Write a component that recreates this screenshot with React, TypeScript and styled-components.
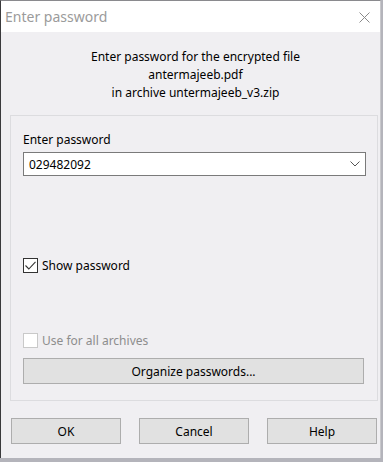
import React from "react";
import styled, { createGlobalStyle } from "styled-components";

const Global = createGlobalStyle`
  html, body { margin: 0; padding: 0; }
  body {
    width: 383px;
    height: 462px;
    overflow: hidden;
    background: #b4b4bb;
    font-family: "Segoe UI", "Noto Sans", "Liberation Sans", sans-serif;
  }
`;

const Window = styled.div`
  width: 381px;
  height: 458px;
  box-sizing: border-box;
  border-left: 1px solid #3a3a3c;
  border-top: 1px solid #8a8a8e;
  border-right: 1px solid #c8c8cc;
  background: #f0eff2;
  display: flex;
  flex-direction: column;
`;

const TitleBar = styled.div`
  height: 31px;
  background: #ffffff;
  display: flex;
  align-items: center;
  justify-content: space-between;
  padding-left: 4px;
  padding-right: 10px;
  flex-shrink: 0;
`;

const Title = styled.span`
  font-size: 14px;
  color: #9b9b9b;
`;

const CloseIcon = styled.svg`
  width: 11px;
  height: 11px;
  margin-top: 1px;
`;

const Body = styled.div`
  flex: 1;
  display: flex;
  flex-direction: column;
  padding: 0 3px 0 9px;
`;

const Message = styled.div`
  margin-top: 16px;
  text-align: center;
  font-size: 12px;
  line-height: 18px;
  color: #000;
  padding-left: 4px;
`;

const GroupBox = styled.div`
  margin-top: 13px;
  width: 368px;
  height: 286px;
  box-sizing: border-box;
  border: 1px solid #dcdcdf;
  padding: 14px 12px 0 12px;
  display: flex;
  flex-direction: column;
`;

const Label = styled.div`
  font-size: 12px;
  line-height: 20px;
  color: #000;
`;

const Combo = styled.div`
  margin-top: 2px;
  width: 343px;
  height: 24px;
  box-sizing: border-box;
  border: 1px solid #7a7a7a;
  background: #fff;
  display: flex;
  align-items: center;
  justify-content: space-between;
  padding: 0 5px 0 5px;
  font-size: 12px;
  color: #000;
`;

const CheckRow = styled.label<{ $top: number; $disabled?: boolean }>`
  margin-top: ${(p) => p.$top}px;
  display: flex;
  align-items: center;
  gap: 4px;
  font-size: 12px;
  line-height: 15px;
  color: ${(p) => (p.$disabled ? "#8d8d8d" : "#000")};
`;

const Box = styled.span<{ $disabled?: boolean }>`
  width: 15px;
  height: 15px;
  box-sizing: border-box;
  border: 1px solid ${(p) => (p.$disabled ? "#c9c9c9" : "#333")};
  background: #fff;
  display: flex;
  align-items: center;
  justify-content: center;
`;

const Button = styled.div<{ $width: number }>`
  width: ${(p) => p.$width}px;
  height: 26px;
  box-sizing: border-box;
  border: 1px solid #adadad;
  background: #e1e1e1;
  display: flex;
  align-items: center;
  justify-content: center;
  font-size: 12px;
  color: #000;
`;

const OrganizeWrap = styled.div`
  margin-top: 10px;
`;

const ButtonRow = styled.div`
  margin-top: 17px;
  display: flex;
  gap: 18px;
  padding-left: 1px;
`;

export default function App() {
  return (
    <>
      <Global />
      <Window>
        <TitleBar>
          <Title>Enter password</Title>
          <CloseIcon viewBox="0 0 11 11">
            <path d="M0.5 0.5 L10.5 10.5 M10.5 0.5 L0.5 10.5" stroke="#8a8a8a" strokeWidth="1" fill="none" />
          </CloseIcon>
        </TitleBar>
        <Body>
          <Message>
            Enter password for the encrypted file
            <br />
            antermajeeb.pdf
            <br />
            in archive untermajeeb_v3.zip
          </Message>
          <GroupBox>
            <Label>Enter password</Label>
            <Combo>
              <span>029482092</span>
              <svg width="10" height="6" viewBox="0 0 10 6">
                <path d="M0.5 0.5 L5 5 L9.5 0.5" stroke="#555" strokeWidth="1" fill="none" />
              </svg>
            </Combo>
            <CheckRow $top={82}>
              <Box>
                <svg width="11" height="9" viewBox="0 0 11 9">
                  <path d="M0.5 4.5 L3.8 8 L10.5 0.8" stroke="#333" strokeWidth="1.1" fill="none" />
                </svg>
              </Box>
              Show password
            </CheckRow>
            <CheckRow $top={60} $disabled>
              <Box $disabled />
              Use for all archives
            </CheckRow>
            <OrganizeWrap>
              <Button $width={341}>Organize passwords...</Button>
            </OrganizeWrap>
          </GroupBox>
          <ButtonRow>
            <Button $width={110}>OK</Button>
            <Button $width={110}>Cancel</Button>
            <Button $width={110}>Help</Button>
          </ButtonRow>
        </Body>
      </Window>
    </>
  );
}
